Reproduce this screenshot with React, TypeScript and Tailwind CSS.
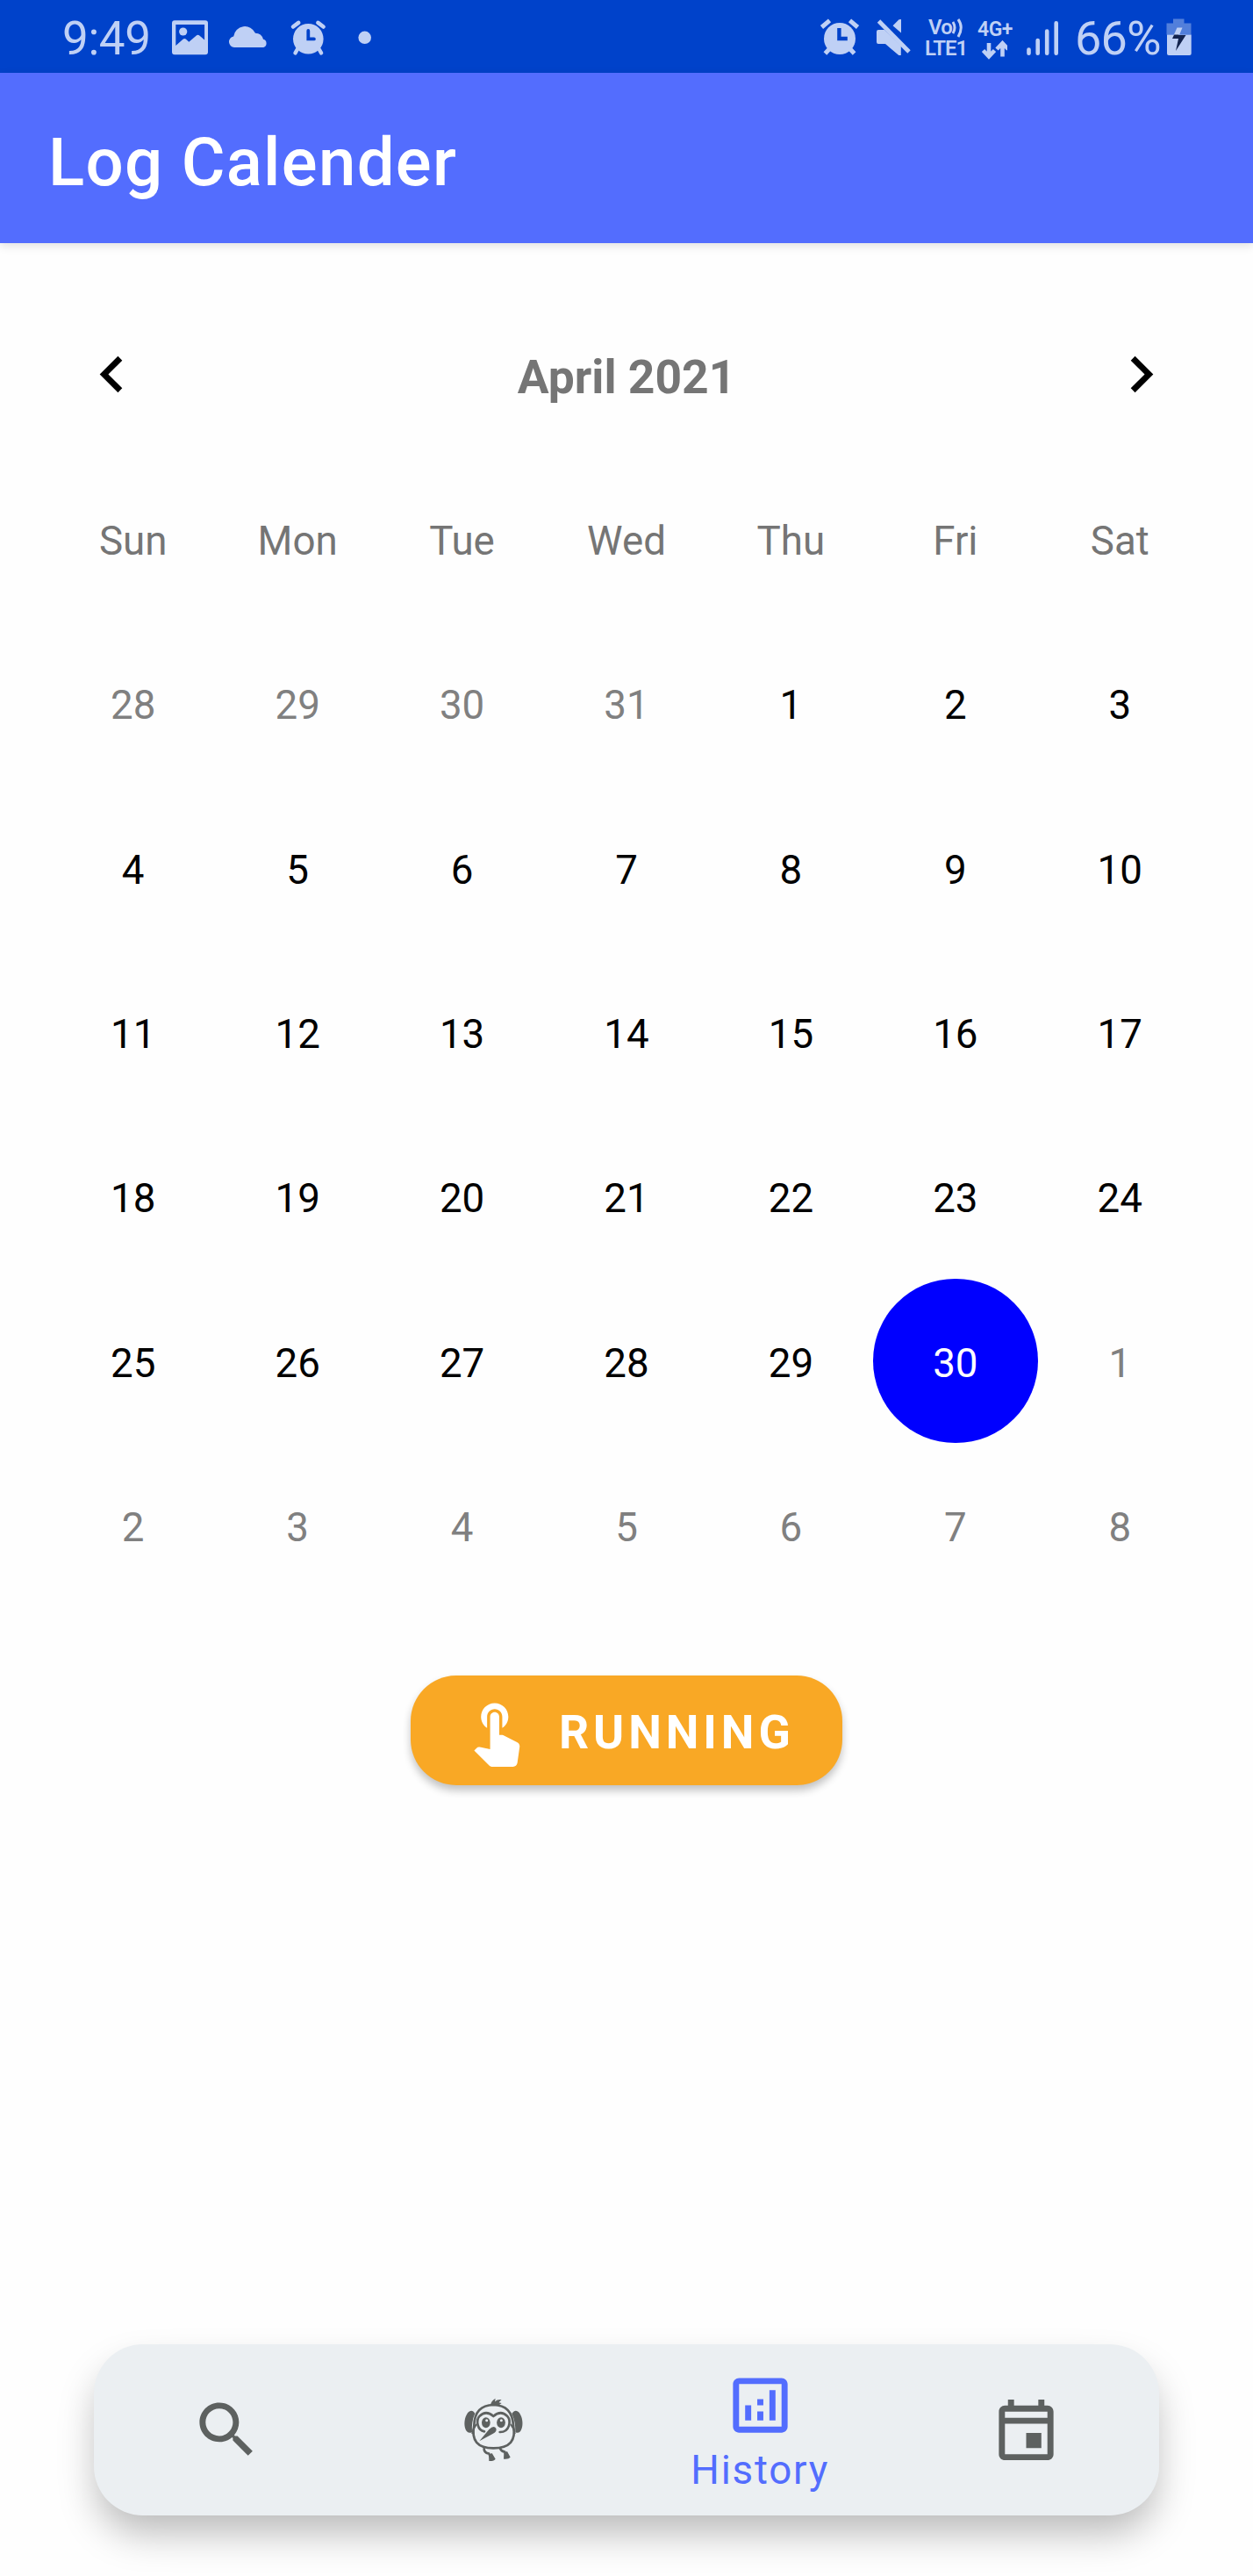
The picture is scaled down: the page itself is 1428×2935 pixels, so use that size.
import React from "react";

const WEEKDAYS = ["Sun", "Mon", "Tue", "Wed", "Thu", "Fri", "Sat"];

type Day = { n: number; outside: boolean; selected: boolean };

const DAYS: Day[] = Array.from({ length: 42 }, (_, i) => {
  const d = i - 3;
  if (d < 1) return { n: d + 31, outside: true, selected: false };
  if (d > 30) return { n: d - 30, outside: true, selected: false };
  return { n: d, outside: false, selected: d === 30 };
});

function dayClass(day: Day) {
  const base = "flex items-center justify-center rounded-full pt-[6px]";
  if (day.selected) return base + " bg-[#0000ff] text-white";
  if (day.outside) return base + " text-[#808080]";
  return base + " text-black";
}

function AlarmLeft() {
  return (
    <svg width="75" height="83" viewBox="315 0 75 83" fill="currentColor" stroke="currentColor" strokeLinecap="round">
      <circle cx="351.3" cy="44.3" r="17.3" stroke="none" />
      <path d="M334 30.5l6.2-4.6M368.6 30.5l-6.2-4.6" strokeWidth="4.6" />
      <path d="M339 56l-2.5 4.4M363.6 56l2.5 4.4" strokeWidth="4.4" />
      <path d="M351.3 35v9.4h6.6" stroke="#0042ca" strokeWidth="3.8" fill="none" />
    </svg>
  );
}

function AlarmRight() {
  return (
    <svg width="65" height="83" viewBox="925 0 65 83" fill="currentColor" stroke="currentColor">
      <circle cx="957" cy="44" r="18" stroke="none" />
      <path d="M936.5 31l9-7.6M977.5 31l-9-7.6" strokeWidth="5" />
      <path d="M945 56l-4.6 5M969 56l4.6 5" strokeWidth="5" />
      <path d="M956.4 32v12h9.4" stroke="#0042ca" strokeWidth="4.4" fill="none" />
    </svg>
  );
}

function StatusBar() {
  return (
    <div className="flex h-[83px] items-center justify-between bg-[#0042ca] pl-[71px] pr-[64px] text-[#bfd0f5]">
      <div className="flex items-center">
        <span className="w-[120px] pt-[5px] text-[53px] leading-none tracking-[-0.4px]">9:49</span>
        <svg width="54" height="83" viewBox="191 0 54 83" fill="currentColor">
          <path
            fillRule="evenodd"
            d="M199 23.3h35a3 3 0 0 1 3 3v33a3 3 0 0 1-3 3h-35a3 3 0 0 1-3-3v-33a3 3 0 0 1 3-3zM200.3 28v24l8.5-7.5q1.500-1.200 3 0l3.500 3.200 8.500-7.300q1.800-1.300 3.500 0l5.800 5.200V28z"
          />
          <circle cx="208.700" cy="36" r="4.600" />
        </svg>
        <svg width="70" height="83" viewBox="245 0 70 83" fill="currentColor">
          <path d="M267 54a6.300 6.300 0 0 1-.8-12.500A13 13 0 0 1 291 37.800a9.500 9.500 0 0 1 9 7A4.800 4.800 0 0 1 300.300 54z" />
        </svg>
        <AlarmLeft />
        <svg width="50" height="83" viewBox="390 0 50 83" fill="currentColor">
          <circle cx="415.700" cy="42.800" r="7.300" />
        </svg>
      </div>
      <div className="flex items-center">
        <AlarmRight />
        <svg width="60" height="83" viewBox="990 0 60 83" fill="currentColor">
          <path d="M1001 34h7l18.800 18v11h-2.500l-15.300-13h-8q-2 0-2-2V36q0-2 2-2zM1027 22v15.500l-9.500-8.300 7-7z" />
          <path d="M1001.500 24l34.500 35" stroke="currentColor" strokeWidth="4.800" />
        </svg>
        <div className="flex h-[83px] w-[58px] flex-col pl-[4px] pt-[20px] font-semibold">
          <span className="flex h-[23px] items-center pl-[4px] text-[24px] leading-[23px] tracking-[-0.8px]">
            Vo
            <svg width="14" height="23" viewBox="0 0 14 23" fill="none" stroke="currentColor" strokeWidth="3">
              <path d="M1 5q4 6.500 0 13M7 2q6.500 9 0 20" />
            </svg>
          </span>
          <span className="h-[23px] text-[24px] leading-[25px] tracking-[-1px]">LTE1</span>
        </div>
        <div className="flex h-[83px] w-[54px] flex-col pl-[6px] pt-[22px] font-semibold">
          <span className="h-[24px] text-[23px] leading-[24px] tracking-[-0.5px]">4G+</span>
          <svg width="34" height="22" viewBox="1114 45.500 34 22" fill="none" stroke="currentColor" strokeWidth="4.600">
            <path d="M1127 48.500v15M1120.500 57l6.500 6.800 6.500-6.800M1142.500 64v-15M1136 55.500l6.500-6.800 6.500 6.800" />
          </svg>
        </div>
        <svg width="54" height="83" viewBox="1162 0 54 83" stroke="currentColor" strokeWidth="4.600" strokeLinecap="round">
          <path d="M1172.500 56.500v4.300M1182.700 46v14.800M1193.200 35.500v25.300M1203.700 26.300v34.500" />
        </svg>
        <span className="w-[108px] pl-[9px] pt-[5px] text-[54px] leading-none tracking-[-0.8px]">66%</span>
        <svg width="40" height="83" viewBox="1324 0 40 83">
          <path d="M1337 21.500h12.500v5h8v13h-28v-13h7.500z" fill="#527fdb" />
          <path d="M1330 39.500h27.700V61q0 2-2 2H1332q-2 0-2-2z" fill="currentColor" />
          <path d="M1341.500 32.500l-5.500 11.500h7l-3 14 11.500-18h-8z" fill="#14244f" />
          <path d="M1341.500 31.500h6l-3.300 8h-6.400z" fill="currentColor" />
        </svg>
      </div>
    </div>
  );
}

function Chevron({ flip = false }: { flip?: boolean }) {
  return (
    <svg width="83" height="83" viewBox="0 0 24 24">
      <path
        d={flip ? "M8.590 16.590L13.170 12 8.590 7.410 10 6l6 6-6 6z" : "M15.410 16.590L10.830 12l4.580-4.590L14 6l-6 6 6 6z"}
      />
    </svg>
  );
}

function KiwiIcon() {
  return (
    <svg width="110" height="110" viewBox="0 0 330 330" fill="none" stroke="currentColor" strokeWidth="8" strokeLinecap="round" strokeLinejoin="round">
      <path d="M92 113C70 98 50 155 69 181q9 8 18 2Q84 148 97 119zM229 113c22-15 42 42 23 68q-9 8-17 2 1-35-12-64z" fill="currentColor" stroke="none" />
      <path d="M94 160Q96 91 160 90Q224 91 228 160Q244 238 160 238Q78 238 94 160z" />
      <path d="M88 187Q91 170 101 158M233 187Q230 170 220 158" strokeWidth="6" />
      <path d="M150 90q2-13 17-22l-2 11q10-9 23-6-8 6-9 9l9 2-9 7z" fill="currentColor" stroke="none" />
      <path d="M129 181C105 177 99 143 113 128q22-21 47 1 25-22 47-1c15 17 8 56-25 55" strokeWidth="8" />
      <ellipse cx="134.500" cy="151" rx="14.500" ry="18" fill="currentColor" stroke="none" />
      <ellipse cx="186" cy="151" rx="14.500" ry="18" fill="currentColor" stroke="none" />
      <circle cx="137" cy="143" r="4.500" fill="#ebeff2" stroke="none" />
      <circle cx="187" cy="143" r="4.500" fill="#ebeff2" stroke="none" />
      <path d="M112 214l33-40q16-15 24-4 4 11-10 18z" fill="currentColor" stroke="none" />
      <path d="M128 240q0 14 17 17l4 9M183 239q4 10 16 12l3 8" strokeWidth="8" />
      <path d="M144 260l11-5 12 20q-5 8-22 7zM196 254l11-5 11 20q-6 8-23 6z" fill="currentColor" stroke="none" />
    </svg>
  );
}

function BottomNav() {
  return (
    <nav className="mx-[107px] mb-[69px] grid h-[195px] grid-cols-4 rounded-[56px] bg-[#ebeff2] text-[#5d6160] shadow-[0_24px_44px_-4px_rgba(0,0,0,0.27)]">
      <button className="flex items-center justify-center">
        <svg width="83" height="83" viewBox="0 0 24 24" fill="currentColor">
          <path d="M15.500 14h-.79l-.28-.27C15.410 12.590 16 11.110 16 9.500 16 5.910 13.090 3 9.500 3S3 5.910 3 9.500 5.910 16 9.500 16c1.610 0 3.090-.59 4.230-1.570l.27.28v.79l5 4.990L20.490 19l-4.990-5zm-6 0C7.010 14 5 11.990 5 9.500S7.010 5 9.500 5 14 7.010 14 9.500 11.990 14 9.500 14z" />
        </svg>
      </button>
      <button className="flex items-center justify-center pb-[7px] pl-[4px]">
        <KiwiIcon />
      </button>
      <button className="flex flex-col items-center pl-[1px] pt-[28px] text-[#536dfe]">
        <svg width="83" height="83" viewBox="0 0 24 24" fill="currentColor" className="shrink-0">
          <path d="M19 3H5c-1.100 0-2 .9-2 2v14c0 1.100.9 2 2 2h14c1.100 0 2-.9 2-2V5c0-1.100-.9-2-2-2zm0 16H5V5h14v14zM7 12h2v5H7zM15 7h2v10h-2zM11 14h2v3h-2zM11 10h2v2h-2z" />
        </svg>
        <span className="mt-[6px] text-[45.700px] leading-[54px] tracking-[1.800px]">History</span>
      </button>
      <button className="flex items-center justify-center">
        <svg width="83" height="83" viewBox="0 0 24 24" fill="currentColor">
          <path d="M19 4h-1V2h-2v2H8V2H6v2H5c-1.110 0-1.990.9-1.990 2L3 20c0 1.100.89 2 2 2h14c1.100 0 2-.9 2-2V6c0-1.100-.9-2-2-2zm0 16H5V10h14v10zm0-12H5V6h14v2zm-7 5h5v5h-5z" />
        </svg>
      </button>
    </nav>
  );
}

export default function App() {
  return (
    <div className="flex h-[2935px] w-[1428px] flex-col bg-[#fefefe] font-['Roboto',sans-serif]">
      <StatusBar />
      <header className="flex h-[194px] items-center bg-[#536dfe] pl-[55px] pt-[10px] shadow-[0_3px_10px_rgba(0,0,0,0.12)]">
        <h1 className="text-[76.200px] font-medium leading-none tracking-[1.300px] text-white">Log Calender</h1>
      </header>

      <main className="flex flex-1 flex-col items-center">
        <div className="mt-[108px] flex h-[83px] w-[1256px] items-center justify-between">
          <button>
            <Chevron />
          </button>
          <span className="pt-[6px] text-[53.400px] font-bold leading-none text-[#757575]">April 2021</span>
          <button>
            <Chevron flip />
          </button>
        </div>

        <div className="mt-[52px] grid w-[1312px] auto-rows-[187.400px] grid-cols-7 text-[45.700px] leading-none">
          {WEEKDAYS.map((w) => (
            <div key={w} className="flex items-center justify-center pt-[6px] text-[#757575]">
              {w}
            </div>
          ))}
          {DAYS.map((d, i) => (
            <div key={i} className={dayClass(d)}>
              {d.n}
            </div>
          ))}
        </div>

        <button className="mt-[77px] flex h-[125px] w-[492px] items-center rounded-[52px] bg-[#f9a825] pl-[56px] text-white shadow-[0_6px_10px_rgba(0,0,0,0.24)]">
          <svg width="83" height="83" viewBox="0 0 24 24" fill="currentColor">
            <path d="M9 11.240V7.500C9 6.120 10.120 5 11.500 5S14 6.120 14 7.500v3.740c1.210-.81 2-2.180 2-3.740C16 5.010 13.990 3 11.500 3S7 5.010 7 7.500c0 1.560.79 2.930 2 3.740zm9.840 4.630l-4.540-2.260c-.17-.07-.35-.11-.54-.11H13v-6c0-.83-.67-1.500-1.500-1.500S10 6.670 10 7.500v10.740l-3.430-.72c-.08-.01-.15-.03-.24-.03-.31 0-.59.13-.79.33l-.79.8 4.940 4.940c.27.27.65.44 1.060.44h6.790c.75 0 1.330-.55 1.440-1.280l.75-5.270c.01-.07.02-.14.02-.2 0-.62-.38-1.160-.91-1.380z" />
          </svg>
          <span className="ml-[30px] pt-[4px] text-[53.400px] font-bold leading-none tracking-[4.900px]">RUNNING</span>
        </button>
      </main>

      <BottomNav />
    </div>
  );
}
